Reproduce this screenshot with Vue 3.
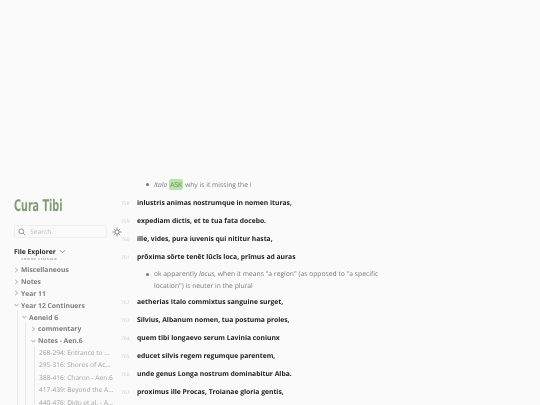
<script setup>
const collapsed = ['Miscellaneous', 'Notes', 'Year 11']
const notes = ['268-294: Entrance to ...', '295-316: Shores of Ac...', '388-416: Charon - Aen.6', '417-439: Beyond the A...', '440-476: Dido et al. - A...']
const before = [
  { n: 758, t: 'inlustris animas nostrumque in nomen ituras,' },
  { n: 759, t: 'expediam dictis, et te tua fata docebo.' },
  { n: 760, t: 'ille, vides, pura iuvenis qui nititur hasta,' },
  { n: 761, t: 'prōxima sōrte tenēt lūcīs loca, prīmus ad auras' },
]
const after = [
  { n: 762, t: 'aetherias Italo commixtus sanguine surget,' },
  { n: 763, t: 'Silvius, Albanum nomen, tua postuma proles,' },
  { n: 764, t: 'quem tibi longaevo serum Lavinia coniunx' },
  { n: 765, t: 'educet silvis regem regumque parentem,' },
  { n: 766, t: 'unde genus Longa nostrum dominabitur Alba.' },
  { n: 767, t: 'proximus ille Procas, Troianae gloria gentis,' },
]
</script>

<template>
  <div class="page">
    <aside class="side">
      <h1 class="title">Cura Tibi</h1>
      <div class="tools">
        <div class="search">
          <svg class="mag" viewBox="0 0 12 12"><circle cx="5" cy="5" r="3.6" /><path d="M7.7 7.7 11 11" /></svg>
          <span>Search</span>
        </div>
        <svg class="sun" viewBox="0 0 12 12">
          <circle cx="6" cy="6" r="2.6" />
          <path d="M6 .6v1.6M6 9.8v1.6M.6 6h1.6M9.8 6h1.6M2.2 2.2l1.1 1.1M8.7 8.7l1.1 1.1M2.2 9.8l1.1-1.1M8.7 3.3l1.1-1.1" />
        </svg>
      </div>
      <div class="explorer">
        <span>File Explorer</span>
        <svg class="chev big" viewBox="0 0 10 10"><path d="M1.5 3 5 7l3.5-4" /></svg>
      </div>
      <div class="tree">
        <div class="row clipped"><span>New notes</span></div>
        <div v-for="c in collapsed" :key="c" class="row">
          <svg class="chev" viewBox="0 0 10 10"><path d="M2 1.5 6 5 2 8.5" /></svg>{{ c }}
        </div>
        <div class="row">
          <svg class="chev" viewBox="0 0 10 10"><path d="M.5 3 4 7l3.5-4" /></svg>Year 12 Continuers
        </div>
        <div class="nest">
          <div class="row">
            <svg class="chev" viewBox="0 0 10 10"><path d="M.5 3 4 7l3.5-4" /></svg>Aeneid 6
          </div>
          <div class="nest">
            <div class="row">
              <svg class="chev" viewBox="0 0 10 10"><path d="M2 1.5 6 5 2 8.5" /></svg>commentary
            </div>
            <div class="row">
              <svg class="chev" viewBox="0 0 10 10"><path d="M.5 3 4 7l3.5-4" /></svg>Notes - Aen.6
            </div>
            <div class="nest files">
              <div v-for="f in notes" :key="f" class="file">{{ f }}</div>
            </div>
          </div>
        </div>
      </div>
    </aside>
    <main class="main">
      <ul class="note first">
        <li><em>Italo</em> <mark>ASK</mark> why is it missing the i</li>
      </ul>
      <div v-for="l in before" :key="l.n" class="line"><span class="num">{{ l.n }}</span><b>{{ l.t }}</b></div>
      <ul class="note second">
        <li>ok apparently <em>locus,</em> when it means "a region" (as opposed to "a specific location") is neuter in the plural</li>
      </ul>
      <div v-for="l in after" :key="l.n" class="line"><span class="num">{{ l.n }}</span><b>{{ l.t }}</b></div>
    </main>
  </div>
</template>

<style>
html, body { margin: 0; background: #fafafa; }
</style>

<style scoped>
.page {
  width: 540px;
  height: 405px;
  overflow: hidden;
  display: flex;
  font-family: "Open Sans", sans-serif;
  font-size: 6.75px;
  color: #8a8a8a;
  text-rendering: geometricPrecision;
  will-change: transform;
}
.side {
  width: 121px;
  flex: none;
  padding: 197px 0 0 14px;
  box-sizing: border-box;
}
.title {
  margin: 0;
  font-family: "DejaVu Sans", sans-serif;
  font-size: 16px;
  line-height: 18px;
  font-weight: 700;
  color: #7f9e72;
  transform: scale(0.6, 1);
  transform-origin: left;
  white-space: nowrap;
}
.tools {
  display: flex;
  align-items: center;
  margin-top: 10px;
  gap: 5px;
}
.search {
  width: 93px;
  height: 13px;
  flex: none;
  display: flex;
  align-items: center;
  gap: 4px;
  padding-left: 3px;
  box-sizing: border-box;
  border: 1px solid #efefef;
  border-radius: 2px;
  color: #c0c0c0;
  font-size: 6.75px;
}
.mag { width: 8px; height: 8px; fill: none; stroke: #666; stroke-width: 1; }
.sun { width: 10px; height: 10px; fill: none; stroke: #555; stroke-width: .9; flex: none; }
.explorer {
  display: flex;
  align-items: center;
  gap: 3px;
  margin-top: 7px;
  height: 12px;
  font-weight: 700;
  font-size: 6.75px;
  color: #2c2c2c;
}
.chev { width: 6px; height: 6px; fill: none; stroke: #777; stroke-width: 1; margin-right: 1px; flex: none; }
.chev.big { width: 7px; height: 7px; }
.tree { height: 200px; overflow: hidden; margin-top: 1px; }
.row {
  display: flex;
  align-items: center;
  height: 11.8px;
  font-weight: 700;
  white-space: nowrap;
  color: #7e7e7e;
}
.row.clipped { height: 3px; margin-bottom: 3px; padding-left: 7px; color: #bbb; overflow: hidden; align-items: flex-end; }
.row.clipped span { line-height: 7px; }
.nest { margin-left: 3px; padding-left: 4px; border-left: 1px solid #e8e8e8; }
.nest .nest { margin-left: 3px; padding-left: 4px; }
.nest .nest .row { margin-left: 1px; }
.nest .files { margin-left: 4px; padding-left: 4px; }
.file { height: 12.5px; line-height: 12.5px; white-space: nowrap; color: #a2a2a2; font-size: 6.6px; }
.main {
  flex: none;
  width: 262px;
  padding-top: 178.5px;
}
.note { margin: 0; padding: 0 0 0 33px; color: #7a7a7a; line-height: 12px; font-size: 6.75px; list-style: none; }
.note li { position: relative; }
.note li::before {
  content: "";
  position: absolute;
  left: -8px;
  top: 4.5px;
  width: 3px;
  height: 3px;
  border-radius: 50%;
  background: #777;
}
.note.first { margin-bottom: 3px; }
.note.second { margin-top: 2.5px; margin-bottom: 1px; }
.note em { font-style: italic; }
mark { background: #b9e3a8; color: #6b8a5c; padding: 1px; border-radius: 2px; }
.line {
  display: flex;
  align-items: baseline;
  height: 18px;
  line-height: 18px;
  white-space: nowrap;
}
.num { width: 16px; flex: none; font-size: 5px; color: #cfcfcf; text-align: left; }
.line b { font-weight: 700; color: #222; font-size: 6.75px; }
</style>
